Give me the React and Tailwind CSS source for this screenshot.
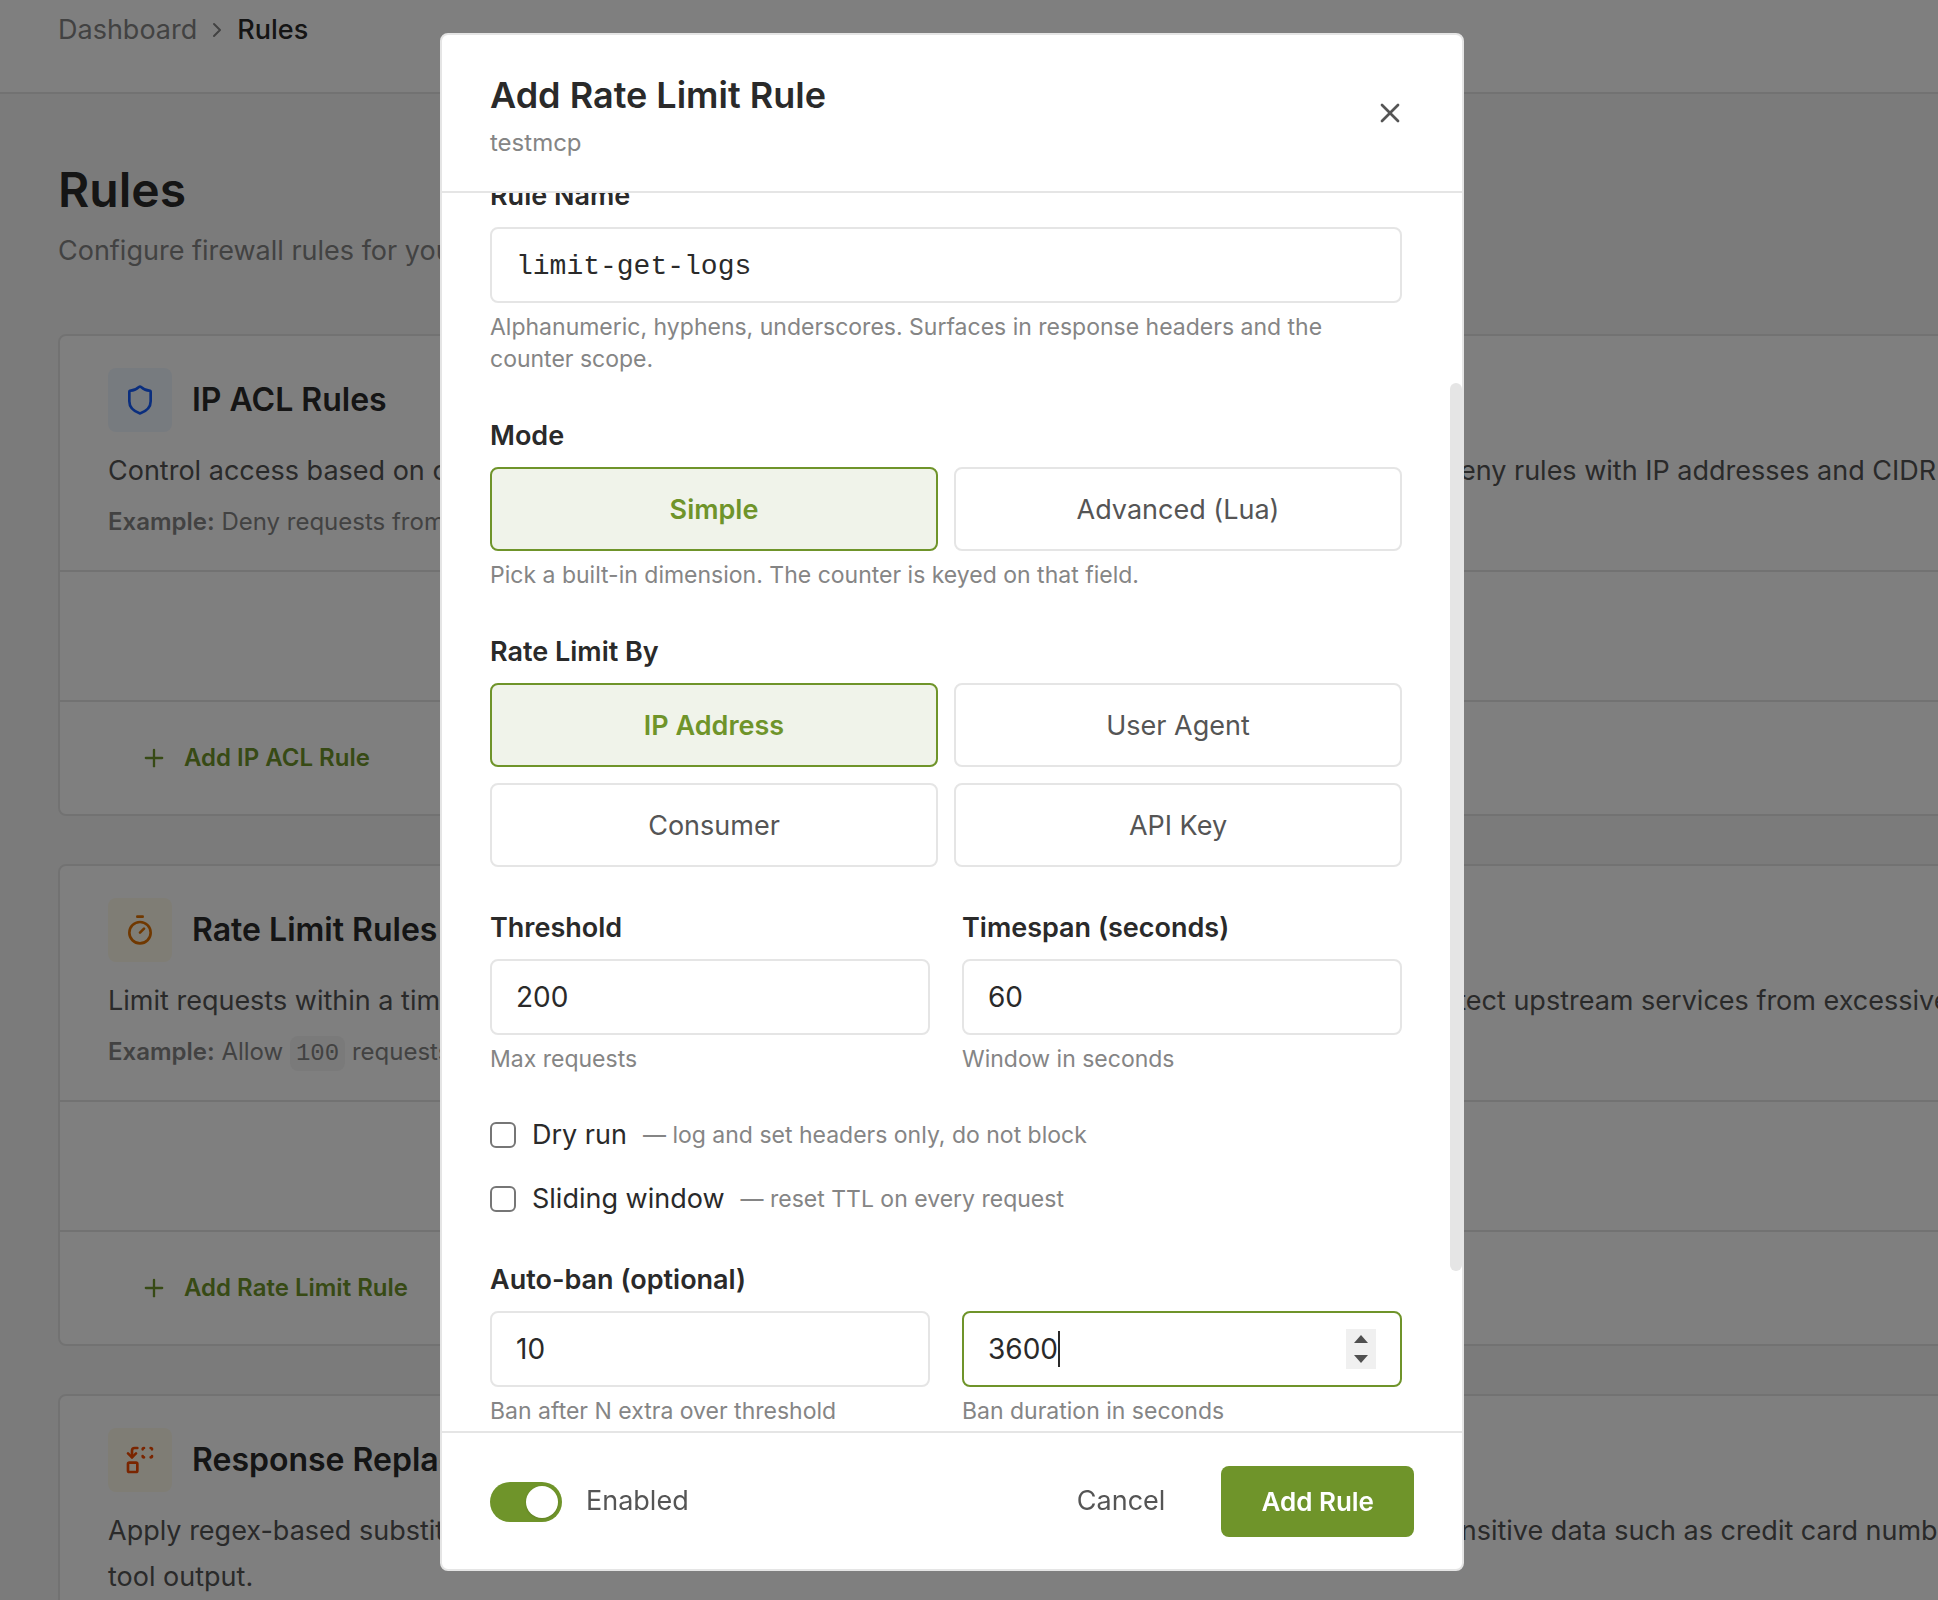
import { useState } from "react";
import { ChevronRight, Plus, Replace, Shield, Timer, X } from "lucide-react";

const RULE_SECTIONS = [
  {
    id: "ip-acl",
    title: "IP ACL Rules",
    icon: Shield,
    iconClass: "bg-blue-50 text-blue-600",
    description: [
      "Control access based on client IP address. Requests are matched in order, so always combine allow and deny rules with IP addresses and CIDR",
    ],
    example: <>Deny requests from a known bad range.</>,
    action: "Add IP ACL Rule",
  },
  {
    id: "rate-limit",
    title: "Rate Limit Rules",
    icon: Timer,
    iconClass: "bg-amber-50 text-amber-600",
    description: [
      "Limit requests within a time window. Tally requests by address, agent, consumer or API key in order to protect upstream services from excessive",
    ],
    example: (
      <>
        Allow{" "}
        <code className="rounded-lg bg-[#f5f5f5] px-1.5 py-1 font-['Liberation_Mono',monospace] leading-none">100</code>{" "}
        requests per minute.
      </>
    ),
    action: "Add Rate Limit Rule",
  },
  {
    id: "response-replace",
    title: "Response Replace Rules",
    icon: Replace,
    iconClass: "bg-amber-50 text-orange-600",
    description: [
      "Apply regex-based substitutions to response bodies before they reach your calling client. Mask or drop sensitive data such as credit card numbers",
      "tool output.",
    ],
    example: <>Replace card numbers with a mask.</>,
    action: "Add Response Replace Rule",
  },
];

const MODES = ["Simple", "Advanced (Lua)"];
const DIMENSIONS = ["IP Address", "User Agent", "Consumer", "API Key"];

function RuleSection({ title, icon: Icon, iconClass, description, example, action }) {
  return (
    <section className="rounded-lg border-2 border-[#e5e5e5] bg-white">
      <div className="px-12 pt-8 pb-7">
        <div className="flex items-center gap-5">
          <span className={`flex size-16 items-center justify-center rounded-lg ${iconClass}`}>
            <Icon size={32} />
          </span>
          <h2 className="text-[32px] leading-10 font-semibold text-[#2a2a2a]">{title}</h2>
        </div>
        <p className="mt-4 text-[27px] leading-[46px] whitespace-nowrap text-[#555]">
          {description.map((line) => (
            <span key={line} className="block">
              {line}
            </span>
          ))}
        </p>
        <p className="mt-2 h-10 text-[24px] leading-10 whitespace-nowrap text-[#858585]">
          <strong className="font-semibold">Example:</strong> {example}
        </p>
      </div>
      <div className="h-[130px] border-t-2 border-[#e5e5e5]" />
      <div className="border-t-2 border-[#e5e5e5] px-12 py-5">
        <button type="button" className="flex h-[72px] items-center gap-4 px-8 text-[24px] font-semibold text-[#6f942a]">
          <Plus size={28} />
          {action}
        </button>
      </div>
    </section>
  );
}

function OptionButton({ active, onClick, children }) {
  return (
    <button
      type="button"
      aria-pressed={active}
      onClick={onClick}
      className={`h-[84px] rounded-lg border-2 pt-0.5 text-[27px] ${
        active
          ? "border-[#6f942a] bg-[#f0f3ea] font-semibold text-[#6f942a]"
          : "border-[#e5e5e5] bg-white text-[#555]"
      }`}
    >
      {children}
    </button>
  );
}

function OptionGroup({ label, options, value, onChange, help }) {
  return (
    <fieldset>
      <legend className="mb-2.5 text-[27px] leading-[42px] font-semibold">{label}</legend>
      <div className="grid grid-cols-2 gap-4">
        {options.map((option) => (
          <OptionButton key={option} active={option === value} onClick={() => onChange(option)}>
            {option}
          </OptionButton>
        ))}
      </div>
      {help && <Help>{help}</Help>}
    </fieldset>
  );
}

function Help({ children }) {
  return <p className="mt-2 text-[23px] leading-8 text-[#858585]">{children}</p>;
}

const inputClass =
  "block h-[76px] w-full rounded-lg border-2 border-[#e5e5e5] bg-white px-6 text-[28px] outline-none [appearance:textfield]";

function NumberField({ id, label, ariaLabel, value, onChange, help }) {
  return (
    <div>
      {label && (
        <label htmlFor={id} className="mb-2.5 block text-[27px] leading-[42px] font-semibold">
          {label}
        </label>
      )}
      <input
        id={id}
        type="number"
        aria-label={ariaLabel}
        value={value}
        onChange={(e) => onChange(e.target.value)}
        className={inputClass}
      />
      <Help>{help}</Help>
    </div>
  );
}

function CheckRow({ label, hint }) {
  return (
    <label className="flex h-10 items-center">
      <input type="checkbox" className="size-[26px] appearance-none rounded-md border-2 border-[#767676] bg-white" />
      <span className="ml-4 text-[27px]">{label}</span>
      <span className="ml-4 text-[23px] text-[#858585]">— {hint}</span>
    </label>
  );
}

function AddRuleModal() {
  const [name, setName] = useState("limit-get-logs");
  const [mode, setMode] = useState("Simple");
  const [dimension, setDimension] = useState("IP Address");
  const [threshold, setThreshold] = useState("200");
  const [timespan, setTimespan] = useState("60");
  const [banAfter, setBanAfter] = useState("10");
  const [banDuration, setBanDuration] = useState("3600");
  const [enabled, setEnabled] = useState(true);

  return (
    <div className="fixed inset-0 flex items-center justify-center bg-black/50 pt-1 pr-[34px]">
      <div
        role="dialog"
        aria-labelledby="modal-title"
        className="relative flex max-h-[calc(100vh-62px)] w-full max-w-5xl flex-col rounded-lg border-2 border-[#e5e5e5] bg-white text-[#2a2a2a]"
      >
        <header className="flex items-center justify-between border-b-2 border-[#e5e5e5] px-12 py-8">
          <div className="flex flex-col gap-1.5 pt-0.5">
            <h2 id="modal-title" className="text-[36px] leading-[52px] font-semibold">
              Add Rate Limit Rule
            </h2>
            <p className="text-[24px] leading-8 text-[#858585]">testmcp</p>
          </div>
          <button type="button" aria-label="Close" className="p-2 text-[#555]">
            <X size={32} />
          </button>
        </header>

        <div className="min-h-0 flex-1 overflow-hidden pr-3">
          <form className="-mt-[18px] flex flex-col gap-10 px-12 pb-12">
            <div>
              <label htmlFor="rule-name" className="mb-2.5 block text-[27px] leading-[42px] font-semibold">
                Rule Name
              </label>
              <input
                id="rule-name"
                type="text"
                value={name}
                onChange={(e) => setName(e.target.value)}
                className={`${inputClass} pt-0.5 font-['Liberation_Mono',monospace]`}
              />
              <Help>Alphanumeric, hyphens, underscores. Surfaces in response headers and the counter scope.</Help>
            </div>

            <OptionGroup
              label="Mode"
              options={MODES}
              value={mode}
              onChange={setMode}
              help="Pick a built-in dimension. The counter is keyed on that field."
            />
            <OptionGroup label="Rate Limit By" options={DIMENSIONS} value={dimension} onChange={setDimension} />

            <div className="grid grid-cols-2 gap-8">
              <NumberField id="threshold" label="Threshold" value={threshold} onChange={setThreshold} help="Max requests" />
              <NumberField
                id="timespan"
                label="Timespan (seconds)"
                value={timespan}
                onChange={setTimespan}
                help="Window in seconds"
              />
            </div>

            <div className="flex flex-col gap-6">
              <CheckRow label="Dry run" hint="log and set headers only, do not block" />
              <CheckRow label="Sliding window" hint="reset TTL on every request" />
            </div>

            <fieldset>
              <legend className="mb-2.5 text-[27px] leading-[42px] font-semibold">Auto-ban (optional)</legend>
              <div className="grid grid-cols-2 gap-8">
                <NumberField
                  id="ban-after"
                  ariaLabel="Ban after"
                  value={banAfter}
                  onChange={setBanAfter}
                  help="Ban after N extra over threshold"
                />
                <div>
                  <div className="flex h-[76px] items-center rounded-lg border-2 border-[#6f942a] px-6">
                    <input
                      type="number"
                      aria-label="Ban duration"
                      value={banDuration}
                      onChange={(e) => setBanDuration(e.target.value)}
                      className="[field-sizing:content] text-[28px] outline-none [appearance:textfield] [&::-webkit-inner-spin-button]:appearance-none"
                    />
                    <span className="h-9 w-0.5 bg-[#2a2a2a]" />
                    <span className="ml-auto flex h-10 w-[30px] flex-col bg-[#f0f0f0] text-[#505050]">
                      <button
                        type="button"
                        aria-label="Increase"
                        onClick={() => setBanDuration(String(Number(banDuration) + 1))}
                        className="flex flex-1 items-center justify-center"
                      >
                        <svg width="14" height="8" viewBox="0 0 14 8" fill="currentColor">
                          <path d="M7 0l7 8H0z" />
                        </svg>
                      </button>
                      <button
                        type="button"
                        aria-label="Decrease"
                        onClick={() => setBanDuration(String(Number(banDuration) - 1))}
                        className="flex flex-1 items-center justify-center"
                      >
                        <svg width="14" height="8" viewBox="0 0 14 8" fill="currentColor">
                          <path d="M0 0h14L7 8z" />
                        </svg>
                      </button>
                    </span>
                  </div>
                  <Help>Ban duration in seconds</Help>
                </div>
              </div>
            </fieldset>
          </form>
        </div>

        {/* scroll thumb */}
        <div className="absolute top-[348px] right-0 h-[888px] w-3 rounded-full bg-[#e5e5e5]" />

        <footer className="flex items-center border-t-2 border-[#e5e5e5] px-12 pt-[33px] pb-8">
          <label className="flex items-center gap-6 text-[27px] text-[#555]">
            <span className="relative flex">
              <input
                type="checkbox"
                role="switch"
                checked={enabled}
                onChange={(e) => setEnabled(e.target.checked)}
                className="h-10 w-[72px] appearance-none rounded-full bg-gray-300 checked:bg-[#6f942a]"
              />
              <span
                className={`pointer-events-none absolute top-1 size-8 rounded-full bg-white shadow ${
                  enabled ? "right-1" : "left-1"
                }`}
              />
            </span>
            Enabled
          </label>
          <button type="button" className="ml-auto h-[71px] px-8 text-[27px] text-[#555]">
            Cancel
          </button>
          <button
            type="button"
            className="ml-6 h-[71px] rounded-lg bg-[#6f942a] px-10 text-[26px] font-semibold text-white"
          >
            Add Rule
          </button>
        </footer>
      </div>
    </div>
  );
}

export default function App() {
  return (
    <div className="h-screen overflow-hidden bg-[#f7f7f7] font-[Inter,sans-serif]">
      <header className="border-b-2 border-[#e5e5e5] bg-white px-[58px] pt-[9px] pb-[41px]">
        <nav aria-label="Breadcrumb" className="flex items-center gap-2 text-[27px] leading-[42px]">
          <a href="#dashboard" className="text-[#858585]">
            Dashboard
          </a>
          <ChevronRight size={24} className="text-[#858585]" />
          <span className="font-medium text-[#2a2a2a]">Rules</span>
        </nav>
      </header>

      <main className="px-[58px] pt-16">
        <h1 className="text-[48px] leading-[64px] font-semibold text-[#2a2a2a]">Rules</h1>
        <p className="mt-2 text-[27px] leading-[42px] text-[#858585]">
          Configure firewall rules for your MCP servers.
        </p>
        <div className="-mr-[120px] mt-[62px] flex flex-col gap-12">
          {RULE_SECTIONS.map((section) => (
            <RuleSection key={section.id} {...section} />
          ))}
        </div>
      </main>

      <AddRuleModal />
    </div>
  );
}
